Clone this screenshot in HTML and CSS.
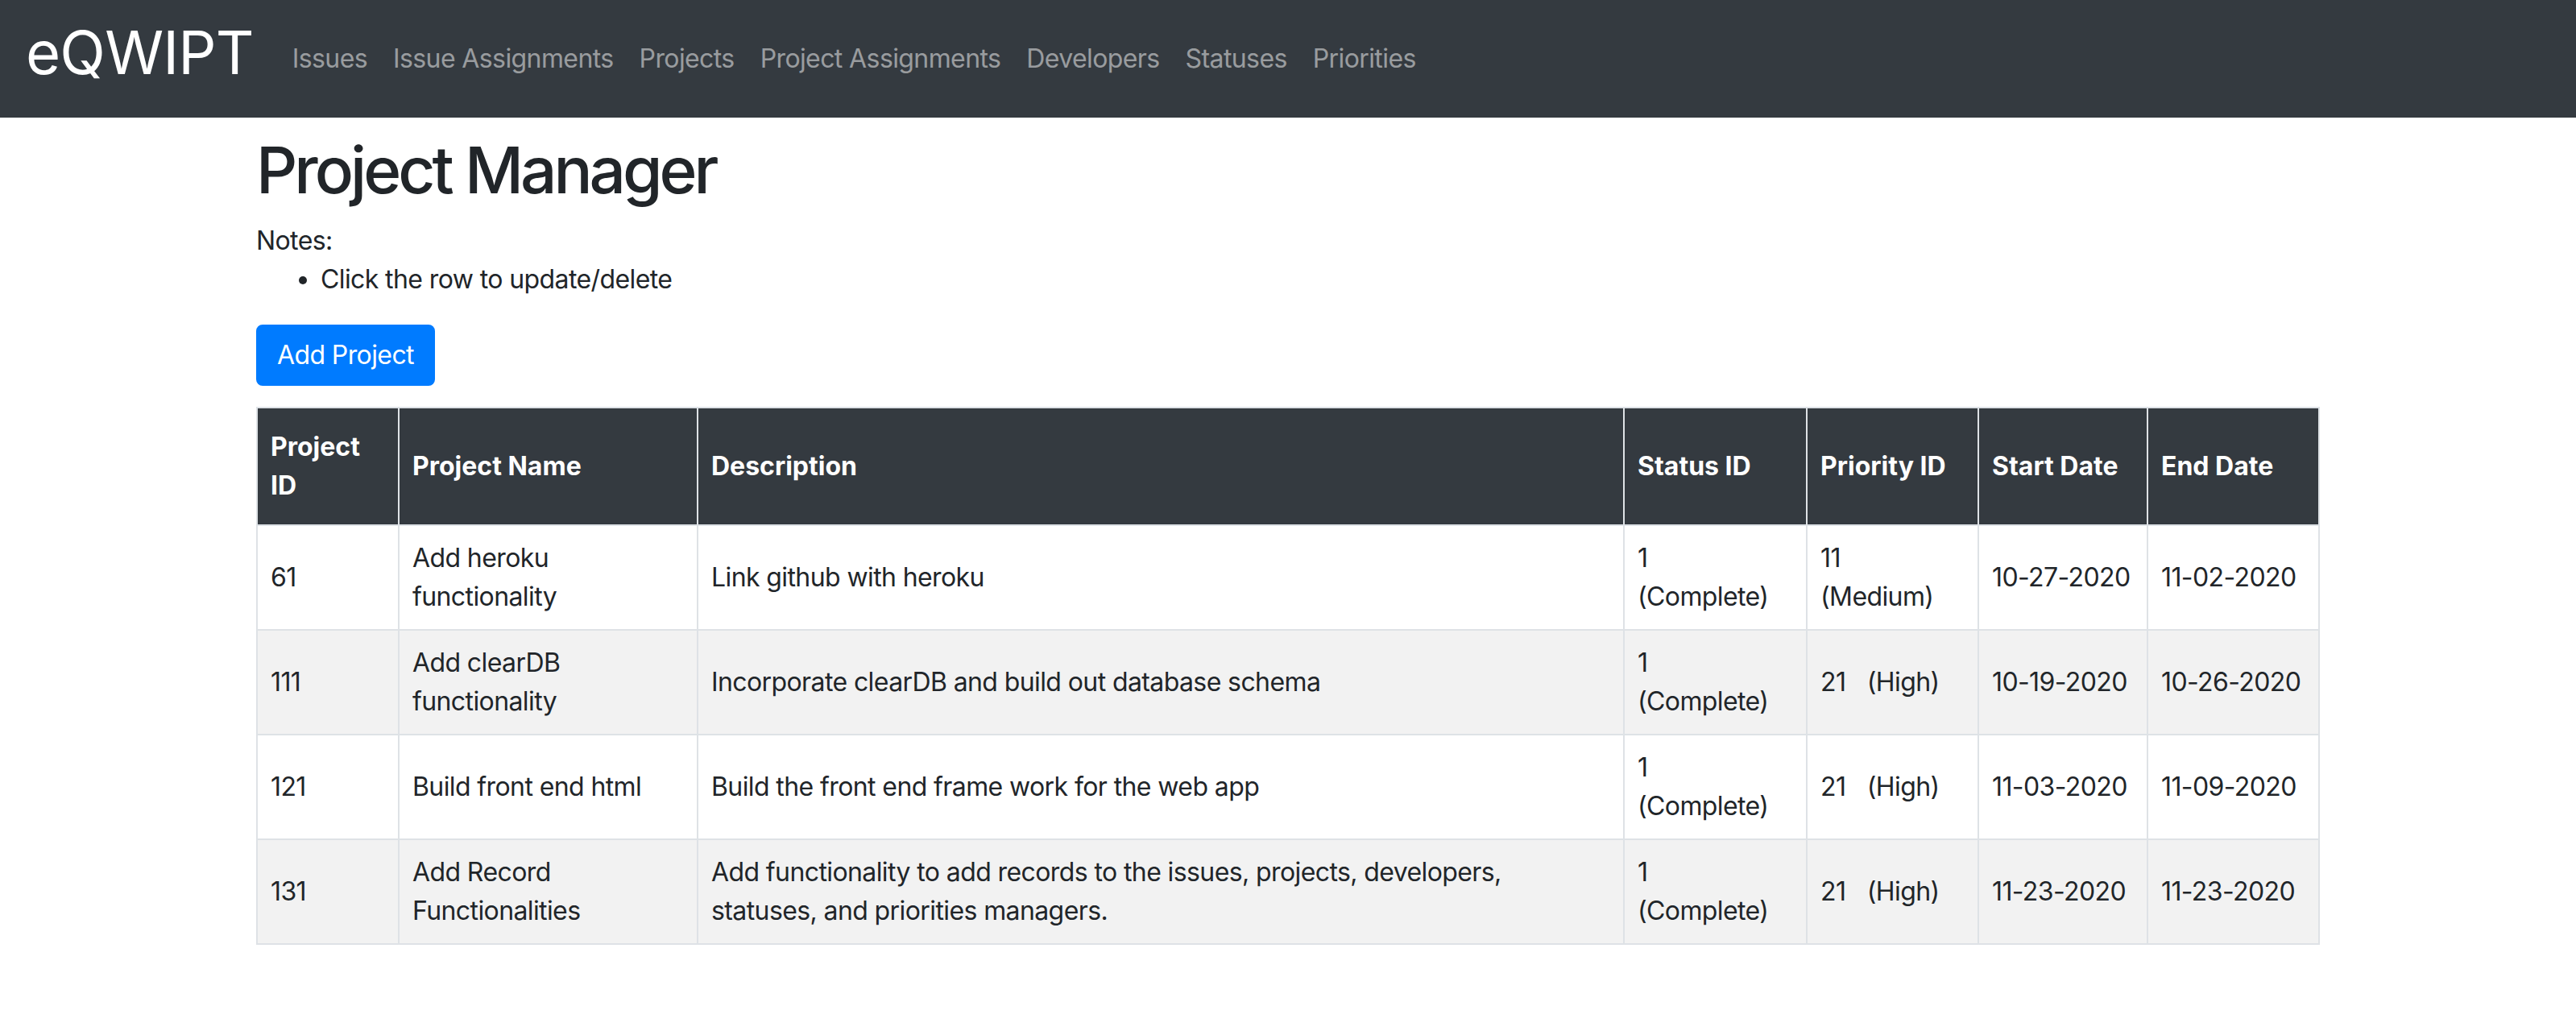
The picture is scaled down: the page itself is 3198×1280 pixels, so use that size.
FILE: index.html
```
<!DOCTYPE html>
<html lang="en">
<head>
<meta charset="utf-8">
<title>eQWIPT - Project Manager</title>
<link rel="stylesheet" href="styles.css">
</head>
<body>
<nav class="navbar">
  <a class="brand" href="#">eQWIPT</a>
  <ul class="nav-links">
    <li><a class="nav-link" href="#">Issues</a></li>
    <li><a class="nav-link" href="#">Issue Assignments</a></li>
    <li><a class="nav-link" href="#">Projects</a></li>
    <li><a class="nav-link" href="#">Project Assignments</a></li>
    <li><a class="nav-link" href="#">Developers</a></li>
    <li><a class="nav-link" href="#">Statuses</a></li>
    <li><a class="nav-link" href="#">Priorities</a></li>
  </ul>
</nav>
<main class="container">
  <h1 class="title">Project Manager</h1>
  <p class="notes-label">Notes:</p>
  <ul class="notes">
    <li>Click the row to update/delete</li>
  </ul>
  <button class="btn-primary" type="button">Add Project</button>
  <table class="table">
    <colgroup>
      <col class="c-id"><col class="c-name"><col class="c-desc"><col class="c-status"><col class="c-prio"><col class="c-date"><col class="c-date2">
    </colgroup>
    <thead>
      <tr>
        <th class="wrap">Project ID</th>
        <th>Project Name</th>
        <th>Description</th>
        <th>Status ID</th>
        <th>Priority ID</th>
        <th>Start Date</th>
        <th>End Date</th>
      </tr>
    </thead>
    <tbody>
      <tr>
        <td>61</td>
        <td>Add heroku functionality</td>
        <td>Link github with heroku</td>
        <td>1 <span class="label">(Complete)</span></td>
        <td>11 <span class="label">(Medium)</span></td>
        <td class="date">10-27-2020</td>
        <td class="date">11-02-2020</td>
      </tr>
      <tr>
        <td>111</td>
        <td>Add clearDB functionality</td>
        <td>Incorporate clearDB and build out database schema</td>
        <td>1 <span class="label">(Complete)</span></td>
        <td>21 <span class="label-inline">(High)</span></td>
        <td class="date">10-19-2020</td>
        <td class="date">10-26-2020</td>
      </tr>
      <tr>
        <td>121</td>
        <td>Build front end html</td>
        <td>Build the front end frame work for the web app</td>
        <td>1 <span class="label">(Complete)</span></td>
        <td>21 <span class="label-inline">(High)</span></td>
        <td class="date">11-03-2020</td>
        <td class="date">11-09-2020</td>
      </tr>
      <tr>
        <td>131</td>
        <td>Add Record Functionalities</td>
        <td>Add functionality to add records to the issues, projects, developers, statuses, and priorities managers.</td>
        <td>1 <span class="label">(Complete)</span></td>
        <td>21 <span class="label-inline">(High)</span></td>
        <td class="date">11-23-2020</td>
        <td class="date">11-23-2020</td>
      </tr>
    </tbody>
  </table>
</main>
</body>
</html>
```
FILE: styles.css
```
* { box-sizing: border-box; }
body {
  margin: 0;
  font-family: Inter, "Noto Sans", sans-serif;
  font-size: 32px;
  line-height: 1.5;
  letter-spacing: -0.6px;
  color: #212529;
  background: #fff;
}
.navbar {
  display: flex;
  align-items: center;
  height: 146px;
  padding: 0 32px;
  background: #343a40;
}
.brand {
  font-size: 74px;
  line-height: 1.2;
  letter-spacing: -0.8px;
  color: #fff;
  text-decoration: none;
  margin-right: 32px;
  margin-bottom: 16px;
}
.nav-links {
  display: flex;
  list-style: none;
  margin: 0;
  padding: 0;
}
.nav-link {
  display: block;
  padding: 0 16px;
  color: rgba(255, 255, 255, 0.5);
  text-decoration: none;
}
.container {
  width: 2562px;
  margin: 0 auto;
}
.title {
  margin: 17px 0 16px;
  font-size: 80px;
  font-weight: 500;
  line-height: 1.2;
  letter-spacing: -4px;
}
.notes-label { margin: 0; }
.notes {
  margin: 0 0 32px;
  padding-left: 80px;
}
.btn-primary {
  display: inline-block;
  font-family: inherit;
  font-size: 32px;
  line-height: 1.5;
  letter-spacing: -0.6px;
  padding: 12px 24px;
  border: 2px solid #007bff;
  border-radius: 8px;
  background: #007bff;
  color: #fff;
}
.table {
  margin-top: 26px;
  width: 2560px;
  table-layout: fixed;
  border-collapse: collapse;
}
.c-id { width: 176px; }
.c-name { width: 371px; }
.c-desc { width: 1150px; }
.c-status { width: 227px; }
.c-prio { width: 213px; }
.c-date { width: 210px; }
.c-date2 { width: 213px; }
.table th {
  background: #343a40;
  color: #fff;
  font-weight: 700;
  letter-spacing: 0;
  text-align: left;
  padding: 24px 16px;
  border: 2px solid #dee2e6;
  vertical-align: middle;
  white-space: nowrap;
}
.table th.wrap { white-space: normal; }
.table td {
  padding: 16px;
  border: 2px solid #dee2e6;
  vertical-align: middle;
}
.table tbody tr:nth-child(even) { background: #f2f2f2; }
.label { display: block; }
.label-inline { margin-left: 18px; }
.date { white-space: nowrap; }
```
